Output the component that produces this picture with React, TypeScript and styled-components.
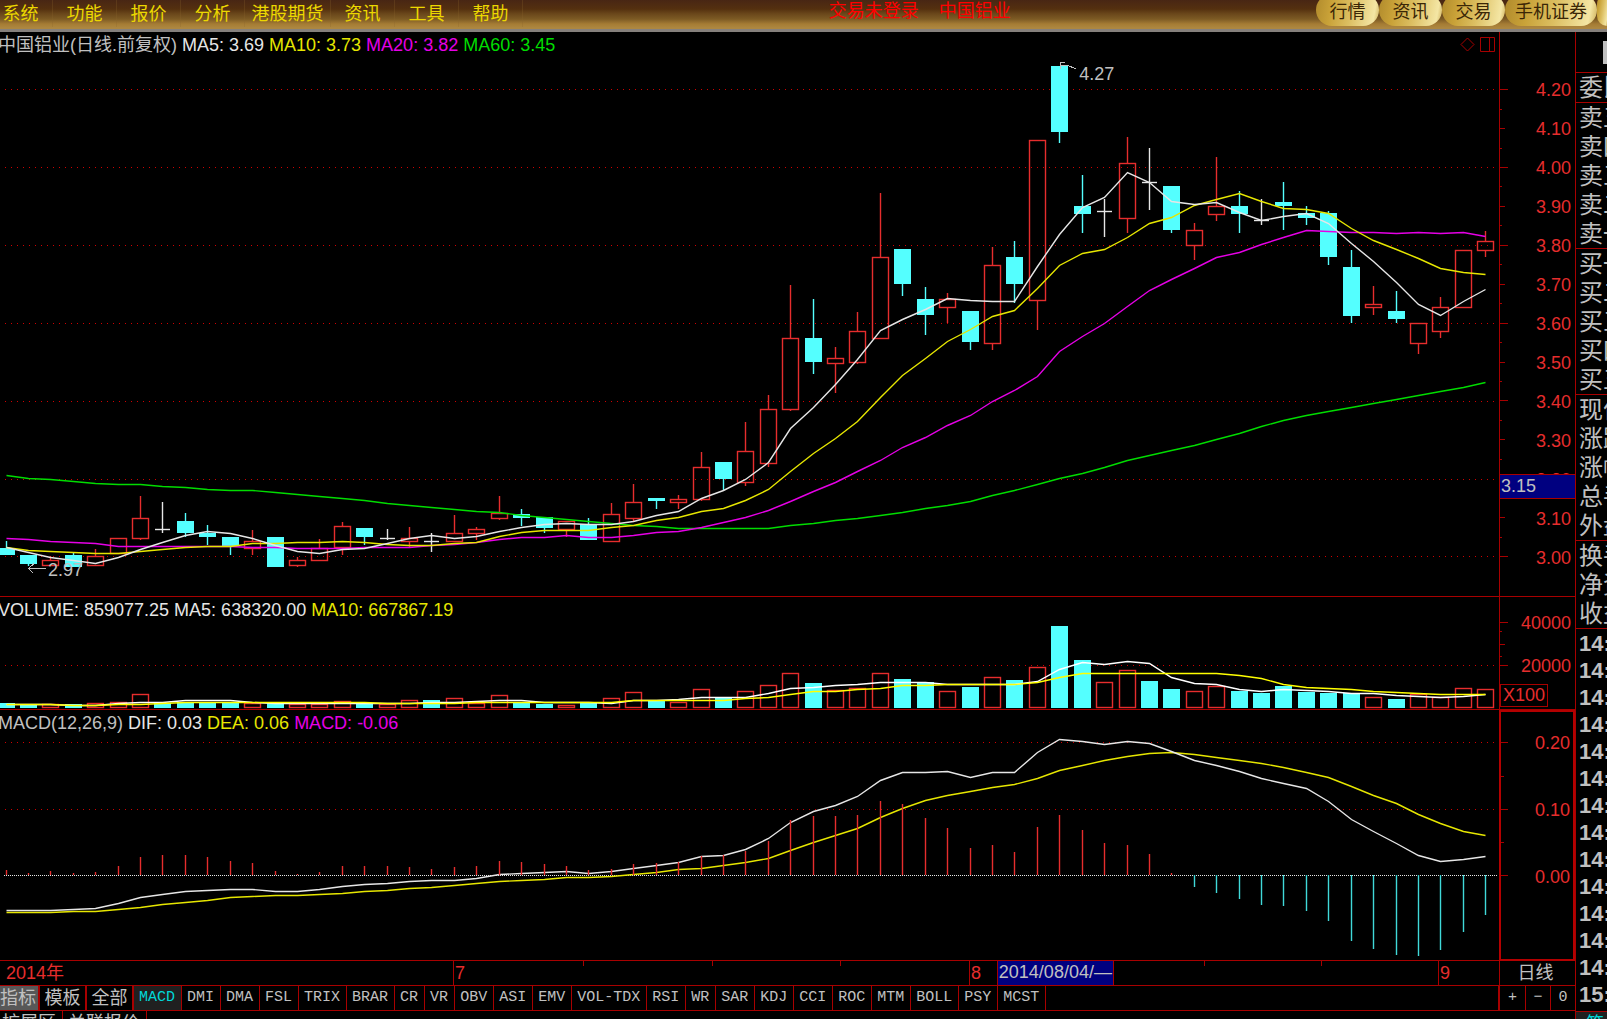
import React from "react";
import styled, { createGlobalStyle } from "styled-components";

const LINE = "#a80000";
const RED = "#e62d2d";
const CYAN = "#54ffff";
const GREY = "#c0c0c0";
const YELLOW = "#e6e600";
const MAGENTA = "#e600e6";
const GREEN = "#00dc00";

const GlobalStyle = createGlobalStyle`
  * { box-sizing: border-box; }
  body {
    margin: 0;
    background: #000;
    color: ${GREY};
    font: 18px/24px "Liberation Sans", "Noto Sans CJK SC", sans-serif;
  }
  button {
    margin: 0;
    padding: 0;
    border: 0;
    background: none;
    color: inherit;
    font: inherit;
    white-space: nowrap;
    cursor: pointer;
  }
  ul { margin: 0; padding: 0; list-style: none; }
`;

/* ---------- data ---------- */

type Kind = "up" | "down" | "flat";
type Candle = [Kind, number, number, number, number];

const U: Kind = "up";
const D: Kind = "down";
const F: Kind = "flat";

// kind, high, body top, body bottom, low
const candles: Candle[] = [
  [D, 541, 548, 555, 555], [D, 555, 555, 564, 566], [U, 556, 560, 565, 566], [D, 552, 555, 567, 567],
  [U, 549, 556, 565, 565], [U, 538, 538, 553, 553], [U, 496, 518, 538, 540], [F, 502, 529, 529, 533],
  [D, 513, 521, 533, 537], [D, 525, 533, 537, 545], [D, 537, 537, 546, 555], [U, 530, 541, 548, 555],
  [D, 537, 537, 567, 567], [U, 557, 560, 565, 567], [U, 539, 548, 560, 560], [U, 522, 526, 547, 555],
  [D, 528, 528, 537, 545], [F, 529, 538, 538, 540], [U, 527, 538, 541, 547], [F, 533, 541, 541, 552],
  [U, 515, 533, 541, 541], [U, 527, 529, 533, 540], [U, 496, 513, 518, 520], [D, 509, 514, 518, 526],
  [D, 517, 517, 528, 533], [U, 521, 521, 529, 537], [D, 518, 524, 540, 540], [U, 503, 514, 541, 541],
  [U, 484, 502, 518, 521], [D, 498, 498, 501, 509], [U, 495, 499, 502, 509], [U, 452, 467, 499, 501],
  [D, 462, 462, 479, 490], [U, 422, 451, 482, 486], [U, 395, 409, 463, 467], [U, 285, 338, 409, 411],
  [D, 299, 338, 362, 374], [U, 347, 358, 363, 393], [U, 312, 331, 362, 364], [U, 193, 257, 338, 338],
  [D, 249, 249, 284, 296], [D, 287, 299, 315, 335], [U, 293, 299, 307, 323], [D, 311, 311, 342, 350],
  [U, 247, 265, 343, 350], [D, 241, 257, 284, 303], [U, 140, 140, 300, 330], [D, 66, 66, 132, 143],
  [D, 175, 206, 214, 233], [F, 199, 211, 211, 237], [U, 137, 163, 218, 233], [F, 148, 182, 182, 210],
  [D, 186, 186, 230, 233], [U, 223, 230, 245, 260], [U, 157, 206, 214, 221], [D, 191, 206, 214, 233],
  [F, 199, 220, 220, 225], [D, 182, 202, 206, 230], [D, 206, 213, 218, 225], [D, 211, 213, 257, 265],
  [D, 250, 267, 316, 323], [U, 286, 304, 307, 315], [D, 291, 311, 319, 323], [U, 323, 323, 343, 354],
  [U, 297, 307, 331, 338], [U, 250, 250, 307, 307], [U, 231, 241, 250, 257],
];

const ma5 = [
  547, 552, 557, 560, 563, 557, 549, 542, 535, 531, 533, 538, 545, 551, 553, 549, 548, 543, 538, 535, 538, 536,
  531, 527, 524, 523, 524, 524, 521, 515, 511, 498, 490, 479, 462, 428, 407, 384, 359, 330, 319, 309, 298, 300,
  301, 301, 266, 234, 207, 197, 172, 182, 201, 204, 202, 212, 220, 216, 213, 223, 243, 261, 282, 304, 315, 301,
  289,
];

const ma10 = [
  547, 550, 551, 552, 553, 553, 551, 549, 547, 546, 546, 543, 543, 542, 542, 541, 542, 544, 545, 545, 543, 542,
  536, 532, 530, 530, 530, 527, 525, 520, 517, 511, 508, 500, 489, 471, 453, 438, 421, 397, 375, 358, 341, 329,
  316, 310, 288, 265, 253, 249, 237, 223, 217, 205, 199, 193, 201, 208, 209, 213, 228, 240, 249, 258, 268, 272,
  274,
];

const ma20 = [
  538, 539, 541, 542, 543, 546, 546, 546, 546, 546, 546, 547, 547, 548, 548, 548, 547, 547, 547, 545, 544, 542,
  539, 537, 537, 535, 537, 537, 535, 532, 531, 527, 522, 517, 510, 501, 491, 482, 471, 460, 447, 437, 425, 415,
  401, 390, 376, 351, 336, 323, 306, 290, 279, 268, 257, 252, 244, 237, 230, 231, 232, 232, 233, 232, 233, 232,
  236,
];

const ma60 = [
  475, 478, 479, 481, 483, 484, 484, 486, 487, 489, 490, 490, 492, 494, 496, 498, 500, 503, 505, 507, 509, 511,
  512, 515, 517, 519, 521, 523, 525, 526, 528, 528, 528, 528, 528, 525, 523, 520, 518, 515, 512, 508, 505, 501,
  495, 490, 484, 478, 473, 467, 460, 455, 450, 445, 439, 433, 426, 420, 415, 411, 407, 403, 399, 395, 391, 387,
  382,
];

const volumeTops: number[] = [
  703, 704, 704, 704, 703, 702, 694, 703, 702, 702, 702, 703, 703, 704, 704, 701, 703, 704, 700, 700, 698, 703,
  695, 702, 704, 705, 702, 698, 692, 701, 702, 689, 697, 691, 685, 673, 683, 690, 688, 673, 679, 682, 691, 687,
  677, 680, 667, 626, 660, 682, 670, 681, 689, 691, 686, 691, 693, 686, 692, 693, 693, 697, 699, 694, 697, 688,
  689,
];
const flatRising = [17, 49];

const volMa5 = [
  704, 704, 704, 705, 705, 703, 702, 702, 700, 700, 700, 702, 703, 703, 703, 703, 703, 703, 703, 702, 702, 701,
  700, 700, 702, 702, 702, 703, 700, 700, 699, 697, 697, 697, 693, 688, 687, 685, 684, 682, 682, 682, 684, 684,
  684, 684, 681, 669, 662, 664, 661, 663, 677, 683, 684, 689, 691, 689, 690, 691, 693, 693, 695, 696, 697, 696,
  694,
];

const volMa10 = [
  704, 704, 704, 705, 705, 704, 704, 703, 702, 702, 702, 702, 702, 702, 702, 702, 702, 703, 703, 703, 703, 702,
  702, 702, 702, 702, 702, 702, 700, 700, 700, 700, 700, 698, 697, 694, 691, 691, 689, 688, 685, 685, 684, 684,
  684, 684, 682, 677, 673, 673, 673, 673, 673, 673, 673, 675, 678, 684, 687, 688, 689, 691, 692, 693, 694, 694,
  694,
];

const histogram = [
  870, 873, 871, 873, 872, 866, 857, 855, 855, 857, 861, 863, 871, 874, 872, 866, 866, 866, 867, 869, 867, 866,
  861, 862, 864, 866, 870, 869, 864, 863, 862, 856, 855, 851, 841, 820, 816, 816, 815, 801, 804, 818, 828, 848,
  845, 852, 827, 815, 830, 843, 845, 854, 873, 887, 893, 899, 905, 906, 911, 921, 941, 949, 955, 956, 950, 932,
  915,
];

const dif = [
  910, 910, 910, 909, 908, 903, 897, 894, 891, 890, 889, 889, 891, 891, 889, 886, 884, 883, 881, 880, 880, 878,
  874, 873, 872, 871, 873, 871, 868, 865, 862, 856, 855, 849, 838, 822, 811, 805, 796, 780, 772, 772, 771, 777,
  772, 772, 752, 739, 741, 744, 741, 743, 751, 760, 765, 771, 778, 783, 788, 801, 819, 831, 843, 855, 861, 859,
  856,
];

const dea = [
  912, 912, 912, 911, 911, 909, 907, 904, 902, 900, 897, 896, 895, 895, 894, 893, 891, 890, 888, 887, 885, 883,
  881, 880, 879, 877, 877, 876, 874, 872, 869, 868, 865, 862, 858, 850, 842, 835, 828, 817, 808, 800, 795, 791,
  787, 784, 778, 770, 765, 760, 756, 753, 752, 754, 757, 760, 763, 767, 772, 777, 786, 795, 803, 814, 823, 831,
  835,
];

const CHART_WIDTH = 1499;
const PRICE_TOP = 32;
const VOLUME_TOP = 597;
const MACD_TOP = 710;
const VOLUME_BASE = 708;
const MACD_ZERO = 875;

const xAt = (i: number) => Math.round(5.5 + i * 22.42);
const points = (ys: number[]) => ys.map((y, i) => `${xAt(i)},${y}`).join(" ");

/* ---------- header ---------- */

const Shell = styled.div`
  height: 100vh;
  display: flex;
  flex-direction: column;
  overflow: hidden;
`;

const Header = styled.header`
  flex: none;
  display: grid;
  grid-template-columns: minmax(0, 830fr) auto minmax(0, 597fr);
  height: 32px;
  overflow: hidden;
  border-bottom: 3px solid #85807c;
  background: linear-gradient(#482614 0, #54300f 9px, #6b481b 14px, #7c5a24 19px, #a57c34 24px, #ad8740 28px);
`;

const Menu = styled.nav`
  display: flex;
  margin-left: -11px;
`;

const MenuItem = styled.button<{ $wide?: boolean }>`
  flex: none;
  width: ${(p) => (p.$wide ? 86 : 64)}px;
  height: 27px;
  border-right: 1px solid #8a662c44;
  color: #ecd800;
`;

const Status = styled.div`
  display: flex;
  gap: 20px;
  color: #ff0000;
  line-height: 22px;
  white-space: nowrap;
`;

const Shortcuts = styled.div`
  display: flex;
  justify-content: flex-end;
`;

const Pill = styled.button<{ $size?: "wide" | "cut" }>`
  flex: none;
  width: ${(p) => (p.$size === "wide" ? 92 : p.$size === "cut" ? 10 : 63)}px;
  height: 32px;
  margin-top: -6px;
  padding-top: 4px;
  border-radius: ${(p) => (p.$size === "cut" ? "16px 0 0 16px" : "16px")};
  background: linear-gradient(100deg, #b08a2c 0, #c9a238 25%, #dcbf62 55%, #f4e6a4 90%, #cdae58 100%);
  color: #3a2606;
  overflow: hidden;
`;

/* ---------- workspace ---------- */

const Workspace = styled.main`
  flex: 1;
  min-height: 0;
  display: grid;
  grid-template-columns: minmax(0, 1fr) 76px 32px;
  grid-template-rows: minmax(0, 565fr) minmax(0, 113fr) minmax(0, 251fr) 25px 25px 8px;
`;

const Panel = styled.section`
  display: grid;
  grid-template-rows: minmax(0, 1fr);
  grid-template-columns: minmax(0, 1fr);
  grid-column: 1;
  position: relative;
  overflow: hidden;
  border-bottom: 1px solid ${LINE};
  & > * {
    grid-area: 1 / 1;
  }
`;

const Plot = styled.svg`
  display: block;
  width: 100%;
  height: 100%;
  shape-rendering: crispEdges;
`;

const Legend = styled.div`
  z-index: 1;
  display: flex;
  justify-self: start;
  align-self: start;
  gap: 5px;
  margin-left: -2px;
  padding-top: 1px;
  white-space: nowrap;
`;

const Reading = styled.span<{ $color?: string }>`
  color: ${(p) => p.$color ?? GREY};
`;

const PanelTools = styled.div`
  z-index: 1;
  display: flex;
  gap: 5px;
  justify-self: end;
  align-self: start;
  padding: 5px 4px 0 0;
`;

const ToolButton = styled.button`
  display: flex;
  svg {
    fill: none;
    stroke: ${LINE};
  }
`;

const Note = styled.span<{ $left: string; $top: string }>`
  position: absolute;
  left: ${(p) => p.$left};
  top: ${(p) => p.$top};
  line-height: 16px;
`;

const Axis = styled.aside`
  grid-column: 2;
  display: grid;
  grid-template-columns: 9px minmax(0, 1fr);
  grid-template-rows: minmax(0, 1fr);
  position: relative;
  border-left: 1px solid ${LINE};
  border-bottom: 1px solid ${LINE};
  color: ${RED};
`;

const BoxedAxis = styled(Axis)`
  border: 2px solid #b40000;
`;

const PriceScale = styled.div`
  display: grid;
  grid-auto-rows: minmax(0, 1fr);
  align-items: center;
  padding: 39px 4px 19px 0;
  text-align: right;
`;

const VolumeScale = styled.div`
  display: flex;
  flex-direction: column;
  gap: 19px;
  padding: 14px 4px 0 0;
  text-align: right;
`;

const MacdScale = styled.div`
  display: grid;
  grid-template-rows: 61fr 73fr 61fr 51fr;
  align-items: center;
  padding-right: 3px;
  text-align: right;
`;

const UnitBox = styled.div`
  position: absolute;
  left: 0;
  bottom: 2px;
  width: 48px;
  border: 1px solid ${LINE};
  padding-left: 2px;
  line-height: 21px;
`;

const Crosshair = styled.output`
  position: absolute;
  left: 0;
  right: 0;
  top: 78.4%;
  border: solid ${LINE};
  border-width: 1px 0;
  background: #000080;
  color: ${GREY};
  padding-left: 1px;
  line-height: 23px;
`;

/* ---------- time axis ---------- */

const TimeRow = styled.div`
  grid-column: 1;
  position: relative;
  display: grid;
  grid-template-columns: 453fr 516fr 469fr 61fr;
  border-bottom: 1px solid ${LINE};
  color: ${RED};
`;

const Month = styled.div<{ $first?: boolean }>`
  display: grid;
  grid-template-columns: repeat(4, minmax(0, 1fr));
  border-left: ${(p) => (p.$first ? "0" : `1px solid ${LINE}`)};
  padding-left: ${(p) => (p.$first ? 6 : 0)}px;
  min-width: 0;
  white-space: nowrap;
`;

const Week = styled.span`
  height: 5px;
  border-left: 1px solid ${LINE};
`;

const MonthName = styled.span`
  padding-left: 1px;
`;

const DateMark = styled.output`
  position: absolute;
  left: 66.5%;
  top: 0;
  bottom: 0;
  border: solid ${LINE};
  border-width: 0 1px;
  background: #000080;
  color: ${GREY};
  padding: 0 1px;
  line-height: 22px;
  white-space: nowrap;
`;

const Period = styled.button`
  grid-column: 2;
  border-left: 1px solid ${LINE};
  border-bottom: 1px solid ${LINE};
  padding-right: 4px;
`;

/* ---------- indicator tabs ---------- */

const TabRow = styled.div`
  grid-column: 1;
  display: flex;
  overflow: hidden;
  border-bottom: 1px solid ${LINE};
  border-right: 1px solid ${LINE};
`;

const ModeTab = styled.button<{ $active?: boolean }>`
  flex: none;
  width: ${(p) => (p.$active ? 40 : 47)}px;
  padding: ${(p) => (p.$active ? "0 2px 0 0" : "0")};
  border-right: 2px solid ${LINE};
  background: ${(p) => (p.$active ? "#585858" : "none")};
`;

const Tab = styled.button<{ $active?: boolean }>`
  flex: none;
  padding: 0 6px 0 5px;
  border-right: 1px solid ${LINE};
  background: ${(p) => (p.$active ? "#202020" : "none")};
  color: ${(p) => (p.$active ? "#00d8d8" : GREY)};
  font: 15px/24px "Liberation Mono", monospace;
`;

const ZoomRow = styled.div`
  grid-column: 2;
  display: grid;
  grid-template-columns: repeat(3, 1fr);
  border-left: 1px solid ${LINE};
  border-bottom: 1px solid ${LINE};
`;

const ZoomButton = styled.button`
  font: 15px/24px "Liberation Mono", monospace;
  & + & {
    border-left: 1px solid ${LINE};
  }
`;

const FootRow = styled.div`
  grid-column: 1 / 3;
  display: flex;
  overflow: hidden;
`;

const FootTab = styled.button`
  flex: none;
  align-self: flex-start;
  height: 24px;
  padding: 0 6px 0 5px;
  border-right: 1px solid ${LINE};
  &:first-child {
    padding-left: 2px;
  }
`;

/* ---------- quote column ---------- */

const Quotes = styled.aside`
  grid-column: 3;
  grid-row: 1 / 7;
  display: flex;
  flex-direction: column;
  overflow: hidden;
  border-left: 1px solid ${LINE};
  font-size: 24px;
  line-height: 28px;
  white-space: nowrap;
`;

const QuoteHead = styled.div`
  flex: none;
  height: 41px;
  display: flex;
  justify-content: flex-end;
  padding-top: 9px;
  border-bottom: 1px solid ${LINE};
  &::after {
    content: "";
    width: 4px;
    height: 23px;
    background: ${GREY};
  }
`;

const QuoteGroup = styled.ul`
  flex: none;
  display: grid;
  gap: 1px;
  padding: 1px 0 0 3px;
  border-bottom: 1px solid ${LINE};
`;

const Tape = styled.ul`
  flex: 1;
  min-height: 0;
  overflow: hidden;
  padding: 1px 0 0 3px;
  border-bottom: 1px solid ${LINE};
  font-size: 22px;
  font-weight: bold;
  line-height: 27px;
`;

const TapeTab = styled.button`
  flex: none;
  display: flex;
  align-items: flex-start;
  height: 7px;
  overflow: hidden;
  padding-left: 10px;
  background: #202020;
  color: #00d8d8;
  font-size: 18px;
  line-height: 24px;
`;

/* ---------- drawing parts ---------- */

const Grid = ({ ys }: { ys: number[] }) => (
  <g stroke="#d00000" strokeDasharray="1 5">
    {ys.map((y) => (
      <line key={y} x1={5} x2={CHART_WIDTH - 4} y1={y + 0.5} y2={y + 0.5} />
    ))}
  </g>
);

const Curve = ({ ys, color }: { ys: number[]; color: string }) => (
  <polyline
    points={points(ys)}
    transform="translate(0.5 0.5)"
    fill="none"
    stroke={color}
    strokeWidth={1.4}
    shapeRendering="geometricPrecision"
  />
);

const Ticks = ({ top, height, marks }: { top: number; height: number; marks: [number, number][] }) => (
  <Plot viewBox={`0 ${top} 9 ${height}`} preserveAspectRatio="none" aria-hidden="true">
    {marks.map(([y, w]) => (
      <line key={y} x1={0} x2={w} y1={y + 0.5} y2={y + 0.5} stroke={LINE} />
    ))}
  </Plot>
);

const CandleMark = ({ candle, x }: { candle: Candle; x: number }) => {
  const [kind, high, top, bottom, low] = candle;
  if (kind === "flat") {
    return (
      <g stroke="#e6e6e6">
        <line x1={x + 0.5} x2={x + 0.5} y1={high} y2={low} />
        <line x1={x - 7} x2={x + 8} y1={top + 0.5} y2={top + 0.5} />
      </g>
    );
  }
  if (kind === "down") {
    return (
      <g>
        <line x1={x + 0.5} x2={x + 0.5} y1={high} y2={low} stroke={CYAN} />
        <rect x={x - 8} y={top} width={17} height={bottom - top} fill={CYAN} />
      </g>
    );
  }
  return (
    <g stroke={RED} fill="none">
      <line x1={x + 0.5} x2={x + 0.5} y1={high} y2={top} />
      <line x1={x + 0.5} x2={x + 0.5} y1={bottom} y2={low} />
      <rect x={x - 7.5} y={top + 0.5} width={16} height={bottom - top} />
    </g>
  );
};

const priceMarks: [number, number][] = Array.from({ length: 25 }, (_, i) => [
  Math.floor(89.7 + i * 19.45),
  i % 4 === 0 ? 8 : i % 2 === 0 ? 5 : 2,
]);

const priceLabels = [
  "4.20", "4.10", "4.00", "3.90", "3.80", "3.70", "3.60", "3.50", "3.40", "3.30", "3.20", "3.10", "3.00",
];

const PricePanel = () => (
  <>
    <Panel>
      <Plot viewBox={`0 ${PRICE_TOP} ${CHART_WIDTH} 564`} preserveAspectRatio="none" role="img" aria-label="日线">
        <Grid ys={[89, 167, 245, 323, 401, 479, 556]} />
        <g strokeWidth={1.4} shapeRendering="geometricPrecision">
          {candles.map((c, i) => (
            <CandleMark key={i} candle={c} x={xAt(i)} />
          ))}
        </g>
        <Curve ys={ma60} color={GREEN} />
        <Curve ys={ma20} color={MAGENTA} />
        <Curve ys={ma10} color={YELLOW} />
        <Curve ys={ma5} color="#e6e6e6" />
        <g stroke={GREY} fill="none">
          <path d="M28.5 568.5H46M34 563.5L28.5 568.5L33 573" />
          <path d="M1060.5 69V62.5H1065M1060 65.5H1068L1076 69" />
        </g>
      </Plot>
      <Legend>
        <Reading>中国铝业(日线.前复权)</Reading>
        <Reading $color="#e6e6e6">MA5: 3.69</Reading>
        <Reading $color={YELLOW}>MA10: 3.73</Reading>
        <Reading $color={MAGENTA}>MA20: 3.82</Reading>
        <Reading $color={GREEN}>MA60: 3.45</Reading>
      </Legend>
      <PanelTools>
        <ToolButton aria-label="标记">
          <svg width="15" height="15" viewBox="0 0 15 15">
            <path d="M7.5 1L14 7.5L7.5 14L1 7.5Z" />
          </svg>
        </ToolButton>
        <ToolButton aria-label="分栏">
          <svg width="15" height="15" viewBox="0 0 15 15">
            <path d="M.5 .5H14.5V14.5H.5ZM9.5 .5V14.5" />
          </svg>
        </ToolButton>
      </PanelTools>
      <Note $left="72%" $top="6%">4.27</Note>
      <Note $left="3.2%" $top="94%">2.97</Note>
    </Panel>
    <Axis>
      <Ticks top={PRICE_TOP} height={564} marks={priceMarks} />
      <PriceScale>
        {priceLabels.map((l) => (
          <span key={l}>{l}</span>
        ))}
      </PriceScale>
      <Crosshair>3.15</Crosshair>
    </Axis>
  </>
);

const VolumePanel = () => (
  <>
    <Panel>
      <Plot viewBox={`0 ${VOLUME_TOP} ${CHART_WIDTH} 112`} preserveAspectRatio="none" role="img" aria-label="VOLUME">
        <Grid ys={[665]} />
        <g strokeWidth={1.4} shapeRendering="geometricPrecision">
          {volumeTops.map((top, i) => {
            const rising = candles[i][0] === "up" || flatRising.includes(i);
            const x = xAt(i);
            return rising ? (
              <rect
                key={i}
                x={x - 7.5}
                y={top + 0.5}
                width={16}
                height={VOLUME_BASE - top - 1}
                fill="none"
                stroke={RED}
              />
            ) : (
              <rect key={i} x={x - 8} y={top} width={17} height={VOLUME_BASE - top} fill={CYAN} />
            );
          })}
        </g>
        <Curve ys={volMa5} color="#ffffff" />
        <Curve ys={volMa10} color="#ffff00" />
      </Plot>
      <Legend>
        <Reading $color="#e6e6e6">VOLUME: 859077.25</Reading>
        <Reading $color="#e6e6e6">MA5: 638320.00</Reading>
        <Reading $color={YELLOW}>MA10: 667867.19</Reading>
      </Legend>
    </Panel>
    <Axis>
      <Ticks top={VOLUME_TOP} height={112} marks={[[622, 8], [631, 2], [644, 5], [656, 2], [665, 8]]} />
      <VolumeScale>
        <span>40000</span>
        <span>20000</span>
      </VolumeScale>
      <UnitBox>X100</UnitBox>
    </Axis>
  </>
);

const MacdPanel = () => (
  <>
    <Panel>
      <Plot viewBox={`0 ${MACD_TOP} ${CHART_WIDTH} 250`} preserveAspectRatio="none" role="img" aria-label="MACD">
        <Grid ys={[742, 809]} />
        <line x1={4} x2={CHART_WIDTH - 2} y1={MACD_ZERO + 0.5} y2={MACD_ZERO + 0.5} stroke="#e6e6e6" strokeDasharray="1 1" />
        <Curve ys={dea} color={YELLOW} />
        <Curve ys={dif} color="#e6e6e6" />
        <g strokeWidth={1.4} shapeRendering="geometricPrecision">
          {histogram.map((y, i) => (
            <line
              key={i}
              x1={xAt(i) + 0.5}
              x2={xAt(i) + 0.5}
              y1={MACD_ZERO}
              y2={y}
              stroke={y < MACD_ZERO ? RED : "#40d8d8"}
            />
          ))}
        </g>
      </Plot>
      <Legend>
        <Reading>MACD(12,26,9)</Reading>
        <Reading $color="#e6e6e6">DIF: 0.03</Reading>
        <Reading $color={YELLOW}>DEA: 0.06</Reading>
        <Reading $color={MAGENTA}>MACD: -0.06</Reading>
      </Legend>
    </Panel>
    <BoxedAxis>
      <Ticks top={MACD_TOP + 2} height={247} marks={[[742, 7], [776, 3], [809, 7], [842, 3], [875, 7]]} />
      <MacdScale>
        <span>0.20</span>
        <span>0.10</span>
        <span>0.00</span>
      </MacdScale>
    </BoxedAxis>
  </>
);

const menu = ["系统", "功能", "报价", "分析", "港股期货", "资讯", "工具", "帮助"];

const indicators = [
  "MACD", "DMI", "DMA", "FSL", "TRIX", "BRAR", "CR", "VR", "OBV", "ASI", "EMV", "VOL-TDX", "RSI", "WR", "SAR",
  "KDJ", "CCI", "ROC", "MTM", "BOLL", "PSY", "MCST",
];

const quoteGroups = [
  ["委比"],
  ["卖五", "卖四", "卖三", "卖二", "卖一"],
  ["买一", "买二", "买三", "买四", "买五"],
  ["现价", "涨跌", "涨幅", "总手", "外盘"],
  ["换手", "净资", "收益"],
];

const tape = [...Array.from({ length: 13 }, () => "14:"), "15:"];

const MonthCell = ({ name }: { name: string }) => (
  <Month>
    <MonthName>{name}</MonthName>
    <Week />
    <Week />
    <Week />
  </Month>
);

export default function App() {
  return (
    <Shell>
      <GlobalStyle />
      <Header>
        <Menu>
          {menu.map((m) => (
            <MenuItem key={m} $wide={m.length > 2}>
              {m}
            </MenuItem>
          ))}
        </Menu>
        <Status>
          <span>交易未登录</span>
          <span>中国铝业</span>
        </Status>
        <Shortcuts>
          <Pill>行情</Pill>
          <Pill>资讯</Pill>
          <Pill>交易</Pill>
          <Pill $size="wide">手机证券</Pill>
          <Pill $size="cut" aria-label="更多" />
        </Shortcuts>
      </Header>
      <Workspace>
        <PricePanel />
        <VolumePanel />
        <MacdPanel />
        <TimeRow>
          <Month $first>
            <span>2014年</span>
          </Month>
          <MonthCell name="7" />
          <MonthCell name="8" />
          <Month>
            <MonthName>9</MonthName>
          </Month>
          <DateMark>2014/08/04/—</DateMark>
        </TimeRow>
        <Period>日线</Period>
        <TabRow>
          <ModeTab $active>指标</ModeTab>
          <ModeTab>模板</ModeTab>
          <ModeTab>全部</ModeTab>
          {indicators.map((name, i) => (
            <Tab key={name} $active={i === 0}>
              {name}
            </Tab>
          ))}
        </TabRow>
        <ZoomRow>
          <ZoomButton>+</ZoomButton>
          <ZoomButton>−</ZoomButton>
          <ZoomButton>0</ZoomButton>
        </ZoomRow>
        <FootRow>
          <FootTab>扩展区</FootTab>
          <FootTab>关联报价</FootTab>
        </FootRow>
        <Quotes>
          <QuoteHead />
          {quoteGroups.map((group) => (
            <QuoteGroup key={group[0]}>
              {group.map((label) => (
                <li key={label}>{label}</li>
              ))}
            </QuoteGroup>
          ))}
          <Tape>
            {tape.map((t, i) => (
              <li key={i}>{t}</li>
            ))}
          </Tape>
          <TapeTab>笔</TapeTab>
        </Quotes>
      </Workspace>
    </Shell>
  );
}
